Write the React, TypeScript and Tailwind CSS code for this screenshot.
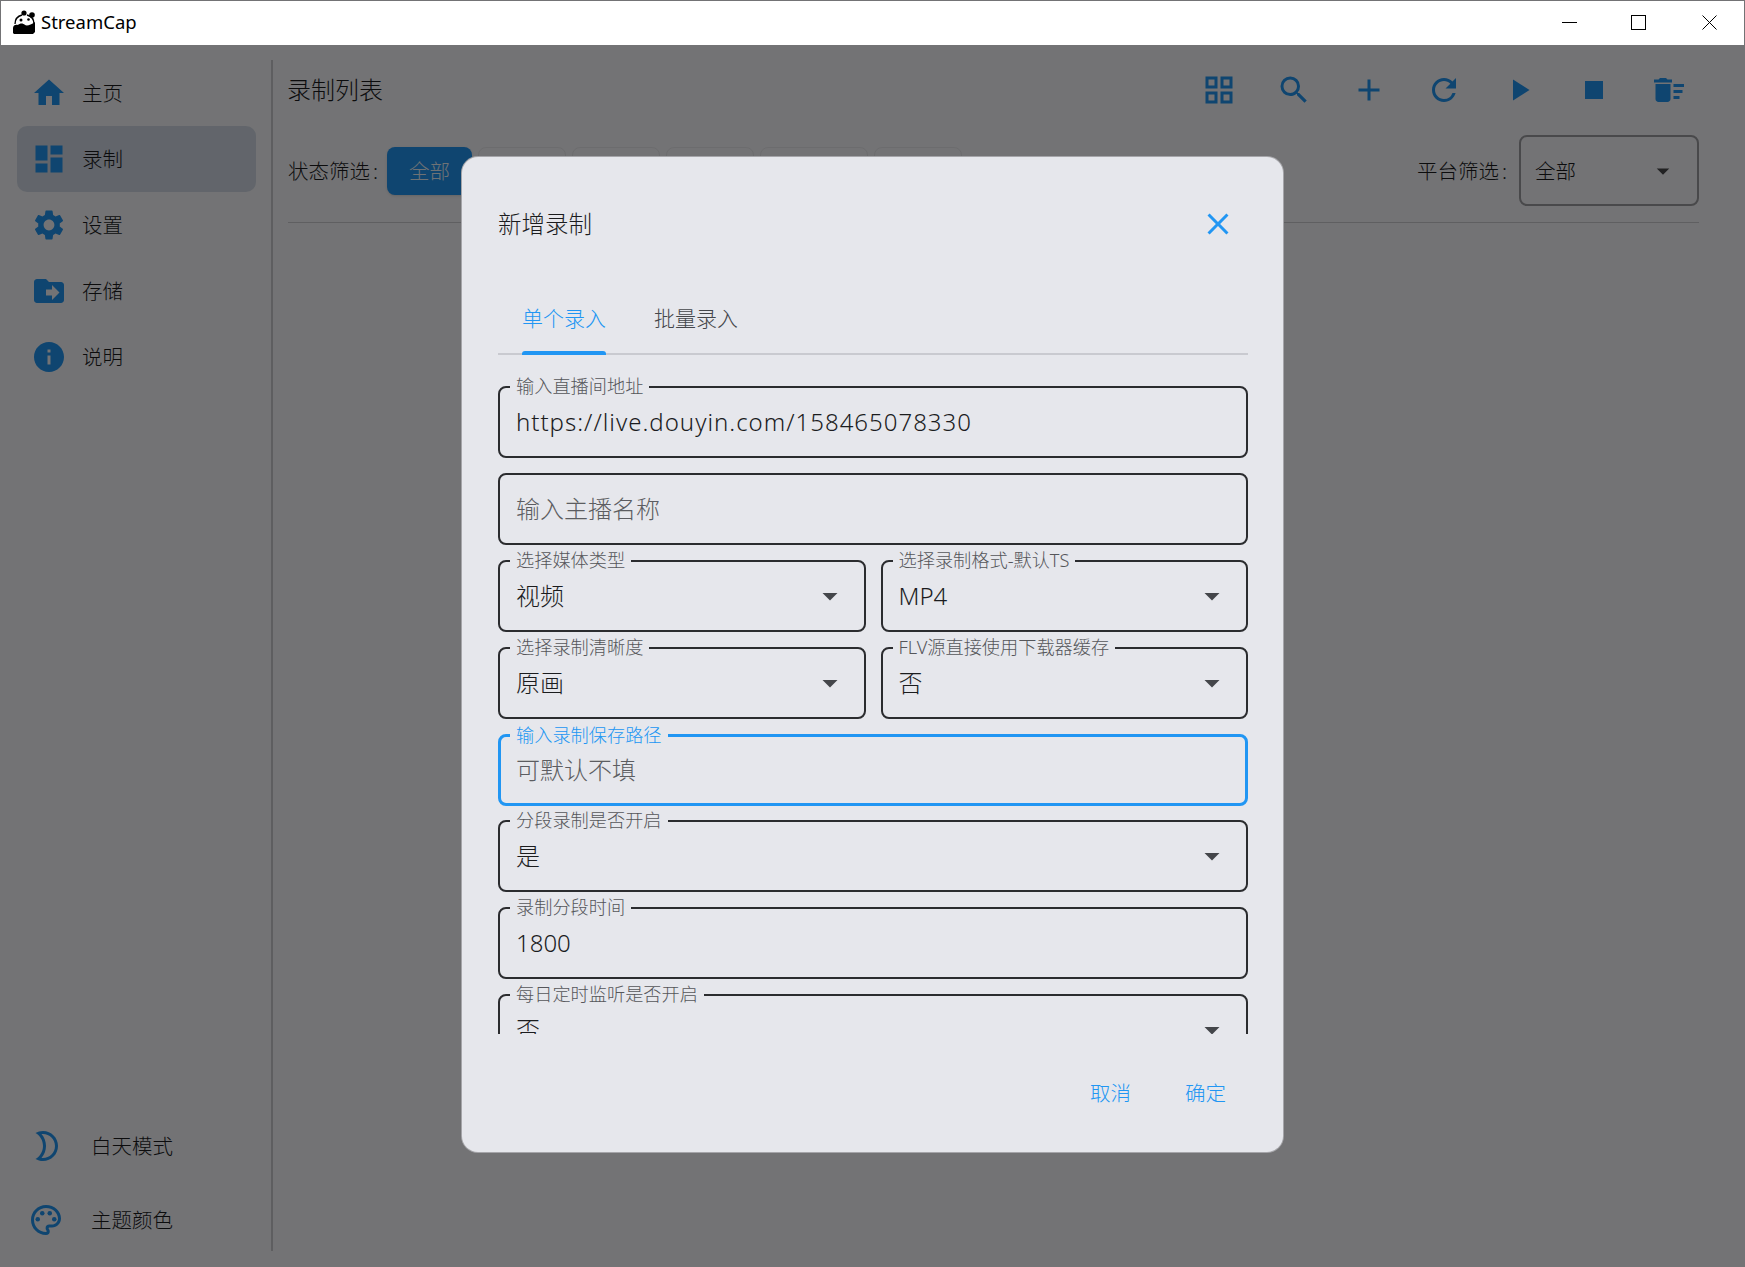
import type { ComponentType, ReactNode } from 'react';
import {
  MdAdd,
  MdArrowDropDown,
  MdClose,
  MdDashboard,
  MdDeleteSweep,
  MdDriveFileMove,
  MdGridView,
  MdHome,
  MdInfo,
  MdOutlineBrightness2,
  MdOutlinePalette,
  MdPlayArrow,
  MdRefresh,
  MdSearch,
  MdSettings,
  MdStop,
} from 'react-icons/md';

const navItems: { label: string; icon: ComponentType<{ size?: number }>; active?: boolean }[] = [
  { label: '主页', icon: MdHome },
  { label: '录制', icon: MdDashboard, active: true },
  { label: '设置', icon: MdSettings },
  { label: '存储', icon: MdDriveFileMove },
  { label: '说明', icon: MdInfo },
];

const toolbarIcons = [MdGridView, MdSearch, MdAdd, MdRefresh, MdPlayArrow, MdStop, MdDeleteSweep];

function Logo() {
  return (
    <svg width="24" height="24" viewBox="0 0 24 24" className="shrink-0">
      <circle cx="12" cy="3" r="2.6" fill="#000" />
      <circle cx="20" cy="5" r="2.8" fill="#000" />
      <path d="M3 14 C3 9 6 6 10 5 M15 5 C19 6 22 9 22 14" fill="none" stroke="#000" strokeWidth="1.3" />
      <circle cx="9" cy="10" r="1.5" fill="#000" />
      <circle cx="16.5" cy="9.5" r="1.3" fill="#000" />
      <path d="M1 23 L1 18 C1 15 4 14 6 15 C8 13 11 13 13 15 C15 16 19 15 23 12 L23 22 L21 24 L2 24 Z" fill="#000" />
    </svg>
  );
}

function WindowControls() {
  return (
    <div className="ml-auto flex items-center pr-[27px]">
      <svg width="15" height="15" viewBox="0 0 15 15" className="block">
        <path d="M0 7.5H15" stroke="#000" strokeWidth="1" />
      </svg>
      <svg width="15" height="15" viewBox="0 0 15 15" className="ml-[54px] block">
        <rect x="0.5" y="0.5" width="14" height="14" fill="none" stroke="#000" strokeWidth="1" />
      </svg>
      <svg width="15" height="15" viewBox="0 0 15 15" className="ml-[56px] block">
        <path d="M0.5 0.5L14.5 14.5M14.5 0.5L0.5 14.5" stroke="#000" strokeWidth="1" />
      </svg>
    </div>
  );
}

function Sidebar() {
  return (
    <aside className="flex w-[270px] shrink-0 flex-col pb-[13px] pl-[16px] pr-[15px] pt-[15px]">
      {navItems.map(({ label, icon: Icon, active }) => (
        <div
          key={label}
          className={`flex h-[66px] items-center gap-[15px] rounded-[10px] pl-[14px] text-[20.5px] ${active ? 'bg-[#d5dde9]' : ''}`}
        >
          <span className="text-[#2196f3]">
            <Icon size={36} />
          </span>
          <span className="pt-[1px]">{label}</span>
        </div>
      ))}
      <div className="mt-auto -ml-[16px] flex flex-col gap-[8px]">
        <div className="flex h-[66px] items-center gap-[27px] pl-[27px] text-[20.5px]">
          <span className="text-[#2196f3]">
            <MdOutlineBrightness2 size={36} />
          </span>
          <span>白天模式</span>
        </div>
        <div className="flex h-[66px] items-center gap-[27px] pl-[27px] text-[20.5px]">
          <span className="text-[#2196f3]">
            <MdOutlinePalette size={36} />
          </span>
          <span>主题颜色</span>
        </div>
      </div>
    </aside>
  );
}

function RecordingsPage() {
  return (
    <main className="flex-1 pl-[15px] pr-[45px] pt-[15px]">
      <div className="flex h-[60px] items-center justify-between">
        <h1 className="-ml-[1px] text-[24px] font-light">录制列表</h1>
        <div className="flex items-center gap-[39px] pr-[12px] text-[#2196f3]">
          {toolbarIcons.map((Icon, i) => (
            <Icon key={i} size={36} />
          ))}
        </div>
      </div>
      <div className="mt-[15px] flex h-[71px] items-center text-[20.5px]">
        <span className="w-[99px] pt-[2px]">
          状态筛选<span className="ml-[3px]">:</span>
        </span>
        <div className="flex gap-[6px]">
          <div className="flex h-[48px] w-[85px] items-center justify-center rounded-[8px] bg-[#2196f3] pt-[2px] text-[#f0f8ff] shadow-sm">
            全部
          </div>
          <div className="h-[48px] w-[88px] rounded-[8px] border border-[#ececf0]" />
          <div className="h-[48px] w-[88px] rounded-[8px] border border-[#ececf0]" />
          <div className="h-[48px] w-[88px] rounded-[8px] border border-[#ececf0]" />
          <div className="h-[48px] w-[108px] rounded-[8px] border border-[#ececf0]" />
          <div className="h-[48px] w-[88px] rounded-[8px] border border-[#ececf0]" />
        </div>
        <span className="ml-auto mr-[12px] pt-[2px]">
          平台筛选<span className="ml-[3px]">:</span>
        </span>
        <div className="flex h-[71px] w-[180px] items-center rounded-[8px] border-2 border-[#9f9fa3] pl-[14px] pr-[19px]">
          <span className="pt-[2px]">全部</span>
          <span className="ml-auto text-[#4a4a4e]">
            <MdArrowDropDown size={30} />
          </span>
        </div>
      </div>
      <div className="mt-[16px] h-[1px] bg-[#cfcfd3]" />
    </main>
  );
}

function Field({
  label,
  value,
  placeholder,
  select,
  focused,
}: {
  label?: string;
  value?: ReactNode;
  placeholder?: string;
  select?: boolean;
  focused?: boolean;
}) {
  return (
    <div
      className={`relative flex h-[72px] min-w-0 items-center rounded-[8px] pr-[16px] text-[24px] ${focused ? 'border-[3px] border-[#2196f3] pl-[15px]' : 'border-2 border-[#2b2c2f] pl-[16px]'}`}
    >
      {label && (
        <span
          className={`absolute bg-[#e6e7ec] px-[6px] text-[18.2px] leading-[22px] ${focused ? '-top-[13px] left-[9px] text-[#2196f3]' : '-top-[13px] left-[10px] text-[#55565a]'}`}
        >
          {label}
        </span>
      )}
      {value && <span className="text-[#1b1c1e]">{value}</span>}
      {placeholder && <span className="text-[#5c5d61]">{placeholder}</span>}
      {select && (
        <span className="ml-auto text-[#44464a]">
          <MdArrowDropDown size={36} />
        </span>
      )}
    </div>
  );
}

function Row({ children }: { children: ReactNode }) {
  return <div className="grid grid-cols-2 gap-[15px]">{children}</div>;
}

function AddRecordingDialog() {
  return (
    <div className="absolute left-[462px] top-[157px] flex h-[995px] w-[821px] flex-col rounded-[16px] bg-[#e6e7ec] pl-[36px] pr-[35px] pt-[43px] shadow-[0_0_0_1px_#a5a5a9]">
      <div className="flex h-[48px] items-center justify-between">
        <h2 className="pt-[1px] text-[23.5px] font-light text-[#1b1c1e]">新增录制</h2>
        <span className="mr-[12px] text-[#2196f3]">
          <MdClose size={36} />
        </span>
      </div>
      <div className="mt-[37px] flex h-[70px] items-start border-b-2 border-[#c9cad0] pl-[24px] pt-[18px] text-[21px]">
        <div className="relative h-[50px] w-[84px] text-center text-[#2196f3]">
          单个录入
          <span className="absolute inset-x-0 -bottom-[2px] h-[4px] rounded-t-[3px] bg-[#2196f3]" />
        </div>
        <div className="ml-[48px] text-[#44464a]">批量录入</div>
      </div>
      <div className="h-[679px] shrink-0 overflow-hidden pt-[31px]">
        <div className="flex flex-col gap-[14.9px]">
          <Field
            label="输入直播间地址"
            value={<span className="tracking-[1px]">https://live.douyin.com/158465078330</span>}
          />
          <Field placeholder="输入主播名称" />
          <Row>
            <Field label="选择媒体类型" value="视频" select />
            <Field label="选择录制格式-默认TS" value="MP4" select />
          </Row>
          <Row>
            <Field label="选择录制清晰度" value="原画" select />
            <Field label="FLV源直接使用下载器缓存" value="否" select />
          </Row>
          <Field label="输入录制保存路径" placeholder="可默认不填" focused />
          <Field label="分段录制是否开启" value="是" select />
          <Field label="录制分段时间" value="1800" />
          <Field label="每日定时监听是否开启" value="否" select />
        </div>
      </div>
      <div className="mt-[44px] flex justify-end gap-[54px] pr-[22px] text-[20.5px] text-[#2196f3]">
        <span>取消</span>
        <span>确定</span>
      </div>
    </div>
  );
}

export default function App() {
  return (
    <div className="relative h-[1267px] w-[1745px] overflow-hidden bg-[#737375] font-['Noto_Sans','Noto_Sans_CJK_SC',sans-serif] font-light text-[#1b1c1e]">
      <div className="mx-[1px] mt-[1px] flex h-[44px] items-center bg-white pb-[2px] pl-[11px] text-[18.5px] font-normal text-black">
        <Logo />
        <span className="ml-[5px]">StreamCap</span>
        <WindowControls />
      </div>
      <div className="relative mx-[1px] flex h-[1221px] bg-[#fafafe]">
        <Sidebar />
        <div className="my-[15px] w-[2px] shrink-0 bg-[#cdcdd1]" />
        <RecordingsPage />
        <div className="absolute inset-0 bg-black/54" />
      </div>
      <AddRecordingDialog />
    </div>
  );
}
